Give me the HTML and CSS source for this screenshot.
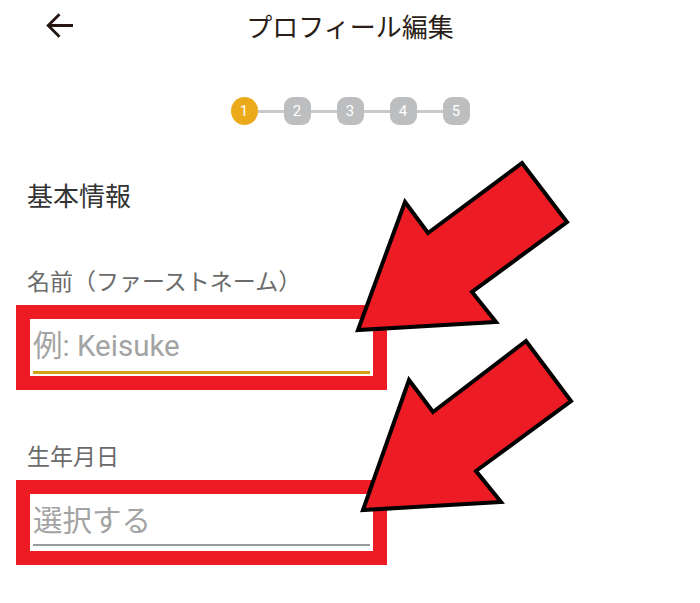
FILE: index.html
```html
<!DOCTYPE html>
<html lang="ja">
<head>
<meta charset="utf-8">
<title>プロフィール編集</title>
<link rel="stylesheet" href="styles.css">
</head>
<body>
<div class="page">
  <header class="topbar">
    <div class="topbar-left">
      <svg class="back-icon" width="28" height="26" viewBox="0 0 28 26" aria-hidden="true">
        <path d="M27 12.5 H2.5 M13.5 1.2 L2.2 12.5 L13.5 23.8" fill="none" stroke="#24160f" stroke-width="2.8" stroke-linecap="butt" stroke-linejoin="miter"/>
      </svg>
    </div>
    <h1 class="topbar-title">プロフィール編集</h1>
    <div class="topbar-right"></div>
  </header>

  <div class="stepper">
    <span class="step step-active">1</span>
    <span class="step-line"></span>
    <span class="step">2</span>
    <span class="step-line"></span>
    <span class="step">3</span>
    <span class="step-line"></span>
    <span class="step">4</span>
    <span class="step-line"></span>
    <span class="step">5</span>
  </div>

  <section class="form">
    <h2 class="section-title">基本情報</h2>

    <div class="field-label">名前（ファーストネーム）</div>
    <div class="highlight">
      <div class="field field-focused">
        <span class="placeholder">例: Keisuke</span>
        <span class="underline underline-focused"></span>
      </div>
    </div>

    <div class="field-label field-label-2">生年月日</div>
    <div class="highlight">
      <div class="field field-plain">
        <span class="placeholder">選択する</span>
        <span class="underline underline-plain"></span>
      </div>
    </div>
  </section>

  <svg class="annotations" width="700" height="603" viewBox="0 0 700 603" aria-hidden="true">
    <polygon points="358,330 405,202 428,233 522,163 567,222 472,292 496,322" fill="#ed1c24" stroke="#000" stroke-width="4" stroke-linejoin="miter"/>
    <polygon points="363,510 409,380 433,412 526,341 571,401 476,471 501,502" fill="#ed1c24" stroke="#000" stroke-width="4" stroke-linejoin="miter"/>
  </svg>
</div>
</body>
</html>
```

FILE: styles.css
```css
* {
  box-sizing: border-box;
}

html, body {
  margin: 0;
  padding: 0;
  background: #ffffff;
}

body {
  font-family: Roboto, "Noto Sans CJK JP", sans-serif;
  width: 700px;
  height: 603px;
  overflow: hidden;
}

.page {
  position: relative;
  width: 700px;
  height: 603px;
}

.topbar {
  display: grid;
  grid-template-columns: 1fr auto 1fr;
  align-items: center;
  height: 52px;
}

.topbar-left {
  padding-left: 46px;
  display: flex;
  align-items: center;
  height: 52px;
}

.back-icon {
  display: block;
}

.topbar-title {
  margin: 0;
  font-family: "Noto Sans CJK JP", sans-serif;
  font-weight: 400;
  font-size: 26px;
  line-height: 48px;
  color: #2b1d17;
  letter-spacing: 0;
}

.stepper {
  display: flex;
  justify-content: center;
  align-items: center;
  margin-top: 45px;
  height: 28px;
}

.step {
  width: 27px;
  height: 28px;
  border-radius: 9px;
  background: #bdbec0;
  color: #ffffff;
  font-family: Roboto, sans-serif;
  font-size: 15px;
  display: flex;
  align-items: center;
  justify-content: center;
}

.step-active {
  border-radius: 50%;
  background: #eaaa1a;
}

.step-line {
  width: 26px;
  height: 3px;
  background: #c9c9c9;
}

.form {
  padding-left: 16px;
}

.section-title {
  margin: 54px 0 0 11px;
  font-family: "Noto Sans CJK JP", sans-serif;
  font-weight: 400;
  font-size: 26px;
  line-height: 31px;
  color: #333333;
}

.field-label {
  margin: 56px 0 0 11px;
  font-family: "Noto Sans CJK JP", sans-serif;
  font-size: 23px;
  line-height: 28px;
  color: #6b6b6b;
}

.field-label-2 {
  margin-top: 51px;
}

.highlight {
  margin-top: 11px;
  width: 371px;
  border: 14px solid #ed1c24;
  background: #ffffff;
}

.field {
  height: 57px;
  display: flex;
  flex-direction: column;
  justify-content: space-between;
  padding: 10px 3px 2px 3px;
}

.field-plain {
  padding-bottom: 5px;
}

.placeholder {
  font-family: Roboto, "Noto Sans CJK JP", sans-serif;
  font-size: 29.5px;
  line-height: 34px;
  color: #a3a3a3;
  white-space: nowrap;
}

.underline {
  display: block;
  width: 100%;
}

.underline-focused {
  height: 3px;
  background: #d6a016;
}

.underline-plain {
  height: 2px;
  background: #9a9a9a;
}

.annotations {
  position: absolute;
  left: 0;
  top: 0;
  pointer-events: none;
}
```
